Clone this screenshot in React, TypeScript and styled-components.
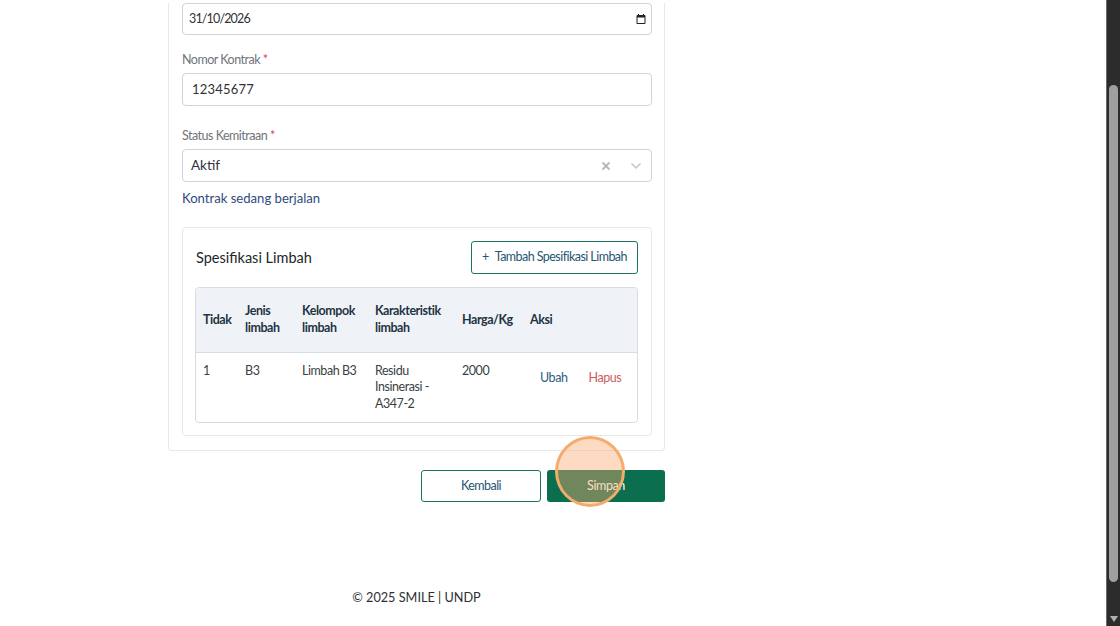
import React from 'react'
import styled, { createGlobalStyle } from 'styled-components'

const GlobalStyle = createGlobalStyle`
    html, body {
        margin: 0;
        height: 626px;
        overflow: hidden;
        background: #fff;
        font-family: Lato, "Noto Sans", sans-serif;
    }
`

const Page = styled.div`
    display: flex;
    height: 626px;
`

const Main = styled.main`
    flex: 1;
    padding: 3px 0 0 168px;
    box-sizing: border-box;
`

const Column = styled.div`
    width: 497px;
    display: flex;
    flex-direction: column;
`

const FormCard = styled.section`
    border: 1px solid #e6e8ea;
    border-top: none;
    border-radius: 0 0 4px 4px;
    padding: 0 12px 14px 13px;
    display: flex;
    flex-direction: column;
`

const Field = styled.div<{ $gap: number }>`
    display: flex;
    flex-direction: column;
    margin-bottom: ${p => p.$gap}px;
`

const Label = styled.label`
    font-size: 12.5px;
    line-height: 16px;
    color: #6f7479;
    letter-spacing: -0.5px;
    margin-bottom: 5px;
`

const Req = styled.span`
    color: #d9415a;
`

const InputBox = styled.div<{ $h: number }>`
    height: ${p => p.$h}px;
    box-sizing: border-box;
    border: 1px solid #ced4da;
    border-radius: 4px;
    background: #fff;
    display: flex;
    align-items: center;
    justify-content: space-between;
    color: #2f3337;
`

const DateValue = styled.span`
    font-size: 12.5px;
    letter-spacing: -0.85px;
    margin: -2px 0 0 6px;
`

const NumberValue = styled.span`
    font-size: 13px;
    letter-spacing: 0.2px;
    margin: -2px 0 0 9px;
`

const SelectValue = styled.span`
    font-size: 13.5px;
    margin: -2px 0 0 8px;
`

const CalendarIcon = styled.svg`
    width: 12px;
    height: 12px;
    margin-right: 4px;
`

const SelectIcons = styled.span`
    display: flex;
    align-items: center;
    gap: 19px;
    margin-right: 9px;
`

const Helper = styled.div`
    font-size: 13.1px;
    line-height: 18px;
    color: #2f4a80;
    margin: 7px 0 20px;
`

const InnerCard = styled.div`
    border: 1px solid #e6e8ea;
    border-radius: 4px;
    padding: 13px;
    height: 209px;
    box-sizing: border-box;
`

const InnerHead = styled.div`
    display: flex;
    align-items: center;
    justify-content: space-between;
    margin-bottom: 13px;
`

const Title = styled.h3`
    margin: -1px 0 0;
    font-size: 14.5px;
    font-weight: 400;
    color: #22262a;
`

const OutlineButton = styled.button<{ $w: number; $h: number }>`
    width: ${p => p.$w}px;
    height: ${p => p.$h}px;
    box-sizing: border-box;
    border: 1px solid #1d7560;
    border-radius: 3px;
    background: #fff;
    color: #1f5673;
    font: 400 12.5px Lato, sans-serif;
    letter-spacing: -0.55px;
    padding: 0 0 2px;
`

const Plus = styled.span`
    margin-right: 6px;
`

const TableFrame = styled.div`
    border: 1px solid #d8dce0;
    border-radius: 4px;
    overflow: hidden;
    margin-left: -1px;
`

const Table = styled.table`
    width: 100%;
    table-layout: fixed;
    border-collapse: collapse;
    font-size: 12.5px;
    line-height: 16.5px;
    letter-spacing: -0.45px;
    color: #3a3f44;
`

const HeadRow = styled.tr`
    height: 64px;
    background: #eff3f7;
    border-bottom: 1px solid #d8dce0;
`

const Th = styled.th`
    padding: 0 7px;
    text-align: left;
    font-weight: 700;
    color: #1f3442;
`

const Td = styled.td`
    padding: 10px 7px 10px;
    vertical-align: top;
`

const ActionCell = styled.td`
    padding: 17px 0 0 17px;
    vertical-align: top;
`

const ActionRow = styled.div`
    display: flex;
`

const ActionLink = styled.span<{ $danger?: boolean }>`
    width: 49px;
    color: ${p => (p.$danger ? '#cf5c5c' : '#2b5d80')};
`

const Actions = styled.div`
    position: relative;
    display: flex;
    justify-content: flex-end;
    gap: 6px;
    margin-top: 19px;
`

const SolidButton = styled.button`
    width: 118px;
    height: 32px;
    border: none;
    border-radius: 3px;
    background: #0b6e4f;
    color: #fff;
    font: 400 12.5px Lato, sans-serif;
    letter-spacing: -0.4px;
    padding: 0 0 2px;
`

const ClickMarker = styled.div`
    position: absolute;
    left: 387px;
    top: -34px;
    width: 70px;
    height: 71px;
    box-sizing: border-box;
    border: 3px solid #f3ac6c;
    border-radius: 50%;
    background: rgba(250, 170, 110, 0.42);
`

const Footer = styled.footer`
    margin-top: 86px;
    text-align: center;
    font-size: 12.7px;
    line-height: 18px;
    color: #2c2f33;
`

const Scrollbar = styled.div`
    width: 14px;
    height: 626px;
    box-sizing: border-box;
    border-left: 1px solid #6b6b6b;
    background: #2c2c2c;
    display: flex;
    flex-direction: column;
    align-items: center;
    padding-top: 85px;
    position: relative;
`

const Thumb = styled.div`
    width: 9px;
    height: 497px;
    border-radius: 5px;
    background: #9f9f9f;
`

const ArrowDown = styled.div`
    position: absolute;
    bottom: 4px;
    width: 0;
    height: 0;
    border-left: 4px solid transparent;
    border-right: 4px solid transparent;
    border-top: 6px solid #b0b0b0;
`

export default function App(): React.ReactElement {
    return (
        <Page>
            <GlobalStyle />
            <Main>
                <Column>
                    <FormCard>
                        <Field $gap={17}>
                            <InputBox $h={32}>
                                <DateValue>31/10/2026</DateValue>
                                <CalendarIcon viewBox="0 0 24 24">
                                    <path
                                        fill="#222"
                                        d="M19 4h-1V2h-2v2H8V2H6v2H5a2 2 0 0 0-2 2v14a2 2 0 0 0 2 2h14a2 2 0 0 0 2-2V6a2 2 0 0 0-2-2zm0 16H5V9h14v11z"
                                    />
                                </CalendarIcon>
                            </InputBox>
                        </Field>
                        <Field $gap={22}>
                            <Label>Nomor Kontrak <Req>*</Req></Label>
                            <InputBox $h={33}>
                                <NumberValue>12345677</NumberValue>
                            </InputBox>
                        </Field>
                        <Field $gap={0}>
                            <Label>Status Kemitraan <Req>*</Req></Label>
                            <InputBox $h={33}>
                                <SelectValue>Aktif</SelectValue>
                                <SelectIcons>
                                    <svg width="10" height="10" viewBox="0 0 10 10">
                                        <path d="M1.5 1.5l7 7M8.5 1.5l-7 7" stroke="#b5b8bb" strokeWidth="1.8" fill="none" />
                                    </svg>
                                    <svg width="12" height="8" viewBox="0 0 12 8">
                                        <path d="M1.5 1.5L6 6l4.5-4.5" stroke="#c2c5c8" strokeWidth="1.5" fill="none" />
                                    </svg>
                                </SelectIcons>
                            </InputBox>
                        </Field>
                        <Helper>Kontrak sedang berjalan</Helper>
                        <InnerCard>
                            <InnerHead>
                                <Title>Spesifikasi Limbah</Title>
                                <OutlineButton $w={167} $h={33}><Plus>+</Plus>Tambah Spesifikasi Limbah</OutlineButton>
                            </InnerHead>
                            <TableFrame>
                                <Table>
                                    <colgroup>
                                        <col width="42" />
                                        <col width="57" />
                                        <col width="73" />
                                        <col width="87" />
                                        <col width="68" />
                                        <col />
                                    </colgroup>
                                    <thead>
                                        <HeadRow>
                                            <Th>Tidak</Th>
                                            <Th>Jenis limbah</Th>
                                            <Th>Kelompok limbah</Th>
                                            <Th>Karakteristik limbah</Th>
                                            <Th>Harga/Kg</Th>
                                            <Th>Aksi</Th>
                                        </HeadRow>
                                    </thead>
                                    <tbody>
                                        <tr>
                                            <Td>1</Td>
                                            <Td>B3</Td>
                                            <Td>Limbah B3</Td>
                                            <Td>Residu Insinerasi - A347-2</Td>
                                            <Td>2000</Td>
                                            <ActionCell>
                                                <ActionRow>
                                                    <ActionLink>Ubah</ActionLink>
                                                    <ActionLink $danger>Hapus</ActionLink>
                                                </ActionRow>
                                            </ActionCell>
                                        </tr>
                                    </tbody>
                                </Table>
                            </TableFrame>
                        </InnerCard>
                    </FormCard>
                    <Actions>
                        <OutlineButton $w={120} $h={32}>Kembali</OutlineButton>
                        <SolidButton>Simpan</SolidButton>
                        <ClickMarker />
                    </Actions>
                    <Footer>© 2025 SMILE | UNDP</Footer>
                </Column>
            </Main>
            <Scrollbar>
                <Thumb />
                <ArrowDown />
            </Scrollbar>
        </Page>
    )
}
